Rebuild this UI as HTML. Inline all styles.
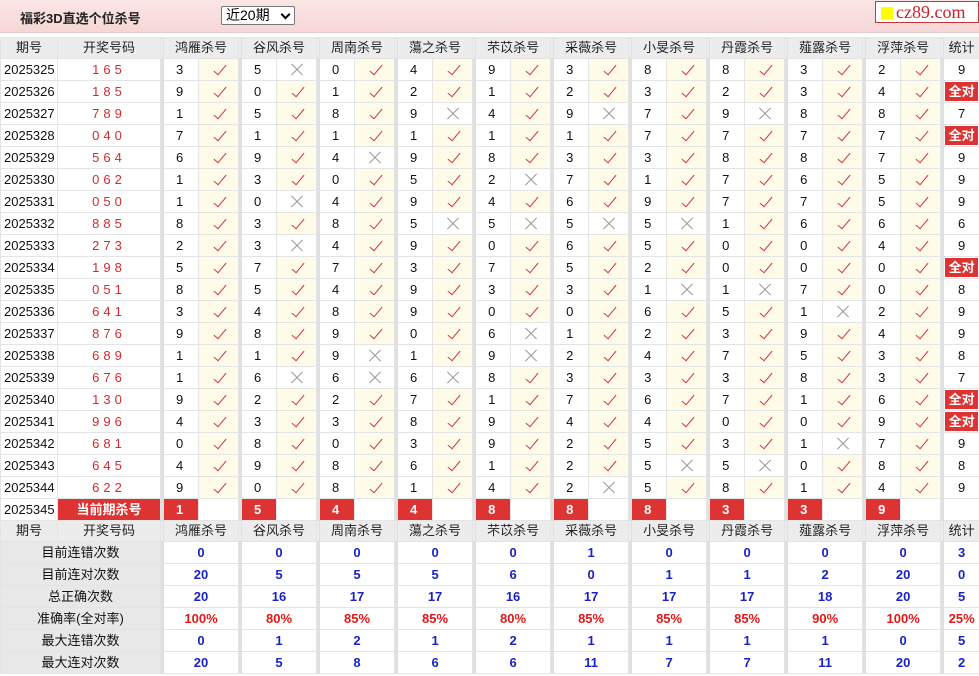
<!DOCTYPE html>
<html><head><meta charset="utf-8">
<style>
body{margin:0;width:979px;height:676px;overflow:hidden;background:#fff;font-family:"Liberation Sans","Noto Sans CJK SC",sans-serif;}
.top{position:absolute;left:0;top:0;width:979px;height:32px;background:linear-gradient(#fbe6e6,#f6d6d6);border-bottom:1px solid #e8c8c8;}
.title{position:absolute;left:20px;top:8px;font-size:13px;font-weight:bold;color:#222;}
.sel{position:absolute;left:221px;top:6px;width:68px;height:17px;border:1px solid #777;border-radius:2px;background:#fff;font-size:14px;line-height:17px;padding-left:4px;box-sizing:content-box;}
.sel i{position:absolute;right:5px;top:4px;width:5px;height:5px;border-right:2px solid #000;border-bottom:2px solid #000;transform:rotate(45deg);}
.logo{position:absolute;left:875px;top:1px;width:102px;height:20px;border:1px solid #c33;background:#fff;font-family:"Liberation Serif",serif;font-size:18px;color:#c8242b;line-height:20px;}
.logo b{display:inline-block;width:12px;height:12px;background:#ff0;margin:0 3px 0 5px;vertical-align:-1px;}
table{position:absolute;left:0;top:37px;border-collapse:collapse;table-layout:fixed;width:979px;font-size:13px;}
td{border:1px solid #e4e4e4;height:21px;line-height:20px;padding:0;text-align:center;color:#111;overflow:hidden;white-space:nowrap;}
tr.h td{background:#ececec;height:20px;color:#222;}
td.s{background:#e0e0e0;border-color:#e0e0e0;}
td.p{text-align:left;padding-left:3px;}
td.n{text-align:left;padding-left:12px;}
td.k{color:#d42b2b;letter-spacing:4px;}
td.y{background:#fffbe9;position:relative;}
td.y:after{content:"";position:absolute;left:18px;top:3px;width:5px;height:12px;border-right:1.6px solid #e0303c;border-bottom:1.6px solid #e0303c;transform:rotate(40deg);}
td.x{position:relative;}
td.x:before,td.x:after{content:"";position:absolute;left:12px;top:10px;width:16px;height:1px;background:#999;transform:rotate(45deg);}
td.x:after{transform:rotate(-45deg);}
td.a{padding:0 1px;}
td.a span{display:block;background:#d33;color:#fff;font-weight:bold;height:19px;line-height:19px;}
td.r{background:#d33;color:#fff;font-weight:bold;text-align:left;padding-left:12px;}
td.cur{background:#d33;color:#fff;font-weight:bold;}
td.l{background:#e8e8e8;}
td.b{color:#1a23c8;font-weight:bold;}
td.rr{color:#e01818;font-weight:bold;}
</style></head><body>
<div class="top"><div class="title">福彩3D直选个位杀号</div><div class="sel">近20期<i></i></div><div class="logo"><b></b>cz89.com</div></div>
<table>
<colgroup><col style="width:57px"><col style="width:103px">
<col style="width:3px"><col style="width:35px"><col style="width:40px">
<col style="width:3px"><col style="width:35px"><col style="width:40px">
<col style="width:3px"><col style="width:35px"><col style="width:40px">
<col style="width:3px"><col style="width:35px"><col style="width:40px">
<col style="width:3px"><col style="width:35px"><col style="width:40px">
<col style="width:3px"><col style="width:35px"><col style="width:40px">
<col style="width:3px"><col style="width:35px"><col style="width:40px">
<col style="width:3px"><col style="width:35px"><col style="width:40px">
<col style="width:3px"><col style="width:35px"><col style="width:40px">
<col style="width:3px"><col style="width:35px"><col style="width:40px">
<col style="width:3px"><col style="width:36px"></colgroup>
<tr class="h"><td>期号</td><td>开奖号码</td><td class="s"></td><td colspan="2">鸿雁杀号</td><td class="s"></td><td colspan="2">谷风杀号</td><td class="s"></td><td colspan="2">周南杀号</td><td class="s"></td><td colspan="2">蕩之杀号</td><td class="s"></td><td colspan="2">芣苡杀号</td><td class="s"></td><td colspan="2">采薇杀号</td><td class="s"></td><td colspan="2">小旻杀号</td><td class="s"></td><td colspan="2">丹霞杀号</td><td class="s"></td><td colspan="2">薤露杀号</td><td class="s"></td><td colspan="2">浮萍杀号</td><td class="s"></td><td>统计</td></tr>
<tr><td class="p">2025325</td><td class="k">165</td><td class="s"></td><td class="n">3</td><td class="y"></td><td class="s"></td><td class="n">5</td><td class="x"></td><td class="s"></td><td class="n">0</td><td class="y"></td><td class="s"></td><td class="n">4</td><td class="y"></td><td class="s"></td><td class="n">9</td><td class="y"></td><td class="s"></td><td class="n">3</td><td class="y"></td><td class="s"></td><td class="n">8</td><td class="y"></td><td class="s"></td><td class="n">8</td><td class="y"></td><td class="s"></td><td class="n">3</td><td class="y"></td><td class="s"></td><td class="n">2</td><td class="y"></td><td class="s"></td><td>9</td></tr>
<tr><td class="p">2025326</td><td class="k">185</td><td class="s"></td><td class="n">9</td><td class="y"></td><td class="s"></td><td class="n">0</td><td class="y"></td><td class="s"></td><td class="n">1</td><td class="y"></td><td class="s"></td><td class="n">2</td><td class="y"></td><td class="s"></td><td class="n">1</td><td class="y"></td><td class="s"></td><td class="n">2</td><td class="y"></td><td class="s"></td><td class="n">3</td><td class="y"></td><td class="s"></td><td class="n">2</td><td class="y"></td><td class="s"></td><td class="n">3</td><td class="y"></td><td class="s"></td><td class="n">4</td><td class="y"></td><td class="s"></td><td class="a"><span>全对</span></td></tr>
<tr><td class="p">2025327</td><td class="k">789</td><td class="s"></td><td class="n">1</td><td class="y"></td><td class="s"></td><td class="n">5</td><td class="y"></td><td class="s"></td><td class="n">8</td><td class="y"></td><td class="s"></td><td class="n">9</td><td class="x"></td><td class="s"></td><td class="n">4</td><td class="y"></td><td class="s"></td><td class="n">9</td><td class="x"></td><td class="s"></td><td class="n">7</td><td class="y"></td><td class="s"></td><td class="n">9</td><td class="x"></td><td class="s"></td><td class="n">8</td><td class="y"></td><td class="s"></td><td class="n">8</td><td class="y"></td><td class="s"></td><td>7</td></tr>
<tr><td class="p">2025328</td><td class="k">040</td><td class="s"></td><td class="n">7</td><td class="y"></td><td class="s"></td><td class="n">1</td><td class="y"></td><td class="s"></td><td class="n">1</td><td class="y"></td><td class="s"></td><td class="n">1</td><td class="y"></td><td class="s"></td><td class="n">1</td><td class="y"></td><td class="s"></td><td class="n">1</td><td class="y"></td><td class="s"></td><td class="n">7</td><td class="y"></td><td class="s"></td><td class="n">7</td><td class="y"></td><td class="s"></td><td class="n">7</td><td class="y"></td><td class="s"></td><td class="n">7</td><td class="y"></td><td class="s"></td><td class="a"><span>全对</span></td></tr>
<tr><td class="p">2025329</td><td class="k">564</td><td class="s"></td><td class="n">6</td><td class="y"></td><td class="s"></td><td class="n">9</td><td class="y"></td><td class="s"></td><td class="n">4</td><td class="x"></td><td class="s"></td><td class="n">9</td><td class="y"></td><td class="s"></td><td class="n">8</td><td class="y"></td><td class="s"></td><td class="n">3</td><td class="y"></td><td class="s"></td><td class="n">3</td><td class="y"></td><td class="s"></td><td class="n">8</td><td class="y"></td><td class="s"></td><td class="n">8</td><td class="y"></td><td class="s"></td><td class="n">7</td><td class="y"></td><td class="s"></td><td>9</td></tr>
<tr><td class="p">2025330</td><td class="k">062</td><td class="s"></td><td class="n">1</td><td class="y"></td><td class="s"></td><td class="n">3</td><td class="y"></td><td class="s"></td><td class="n">0</td><td class="y"></td><td class="s"></td><td class="n">5</td><td class="y"></td><td class="s"></td><td class="n">2</td><td class="x"></td><td class="s"></td><td class="n">7</td><td class="y"></td><td class="s"></td><td class="n">1</td><td class="y"></td><td class="s"></td><td class="n">7</td><td class="y"></td><td class="s"></td><td class="n">6</td><td class="y"></td><td class="s"></td><td class="n">5</td><td class="y"></td><td class="s"></td><td>9</td></tr>
<tr><td class="p">2025331</td><td class="k">050</td><td class="s"></td><td class="n">1</td><td class="y"></td><td class="s"></td><td class="n">0</td><td class="x"></td><td class="s"></td><td class="n">4</td><td class="y"></td><td class="s"></td><td class="n">9</td><td class="y"></td><td class="s"></td><td class="n">4</td><td class="y"></td><td class="s"></td><td class="n">6</td><td class="y"></td><td class="s"></td><td class="n">9</td><td class="y"></td><td class="s"></td><td class="n">7</td><td class="y"></td><td class="s"></td><td class="n">7</td><td class="y"></td><td class="s"></td><td class="n">5</td><td class="y"></td><td class="s"></td><td>9</td></tr>
<tr><td class="p">2025332</td><td class="k">885</td><td class="s"></td><td class="n">8</td><td class="y"></td><td class="s"></td><td class="n">3</td><td class="y"></td><td class="s"></td><td class="n">8</td><td class="y"></td><td class="s"></td><td class="n">5</td><td class="x"></td><td class="s"></td><td class="n">5</td><td class="x"></td><td class="s"></td><td class="n">5</td><td class="x"></td><td class="s"></td><td class="n">5</td><td class="x"></td><td class="s"></td><td class="n">1</td><td class="y"></td><td class="s"></td><td class="n">6</td><td class="y"></td><td class="s"></td><td class="n">6</td><td class="y"></td><td class="s"></td><td>6</td></tr>
<tr><td class="p">2025333</td><td class="k">273</td><td class="s"></td><td class="n">2</td><td class="y"></td><td class="s"></td><td class="n">3</td><td class="x"></td><td class="s"></td><td class="n">4</td><td class="y"></td><td class="s"></td><td class="n">9</td><td class="y"></td><td class="s"></td><td class="n">0</td><td class="y"></td><td class="s"></td><td class="n">6</td><td class="y"></td><td class="s"></td><td class="n">5</td><td class="y"></td><td class="s"></td><td class="n">0</td><td class="y"></td><td class="s"></td><td class="n">0</td><td class="y"></td><td class="s"></td><td class="n">4</td><td class="y"></td><td class="s"></td><td>9</td></tr>
<tr><td class="p">2025334</td><td class="k">198</td><td class="s"></td><td class="n">5</td><td class="y"></td><td class="s"></td><td class="n">7</td><td class="y"></td><td class="s"></td><td class="n">7</td><td class="y"></td><td class="s"></td><td class="n">3</td><td class="y"></td><td class="s"></td><td class="n">7</td><td class="y"></td><td class="s"></td><td class="n">5</td><td class="y"></td><td class="s"></td><td class="n">2</td><td class="y"></td><td class="s"></td><td class="n">0</td><td class="y"></td><td class="s"></td><td class="n">0</td><td class="y"></td><td class="s"></td><td class="n">0</td><td class="y"></td><td class="s"></td><td class="a"><span>全对</span></td></tr>
<tr><td class="p">2025335</td><td class="k">051</td><td class="s"></td><td class="n">8</td><td class="y"></td><td class="s"></td><td class="n">5</td><td class="y"></td><td class="s"></td><td class="n">4</td><td class="y"></td><td class="s"></td><td class="n">9</td><td class="y"></td><td class="s"></td><td class="n">3</td><td class="y"></td><td class="s"></td><td class="n">3</td><td class="y"></td><td class="s"></td><td class="n">1</td><td class="x"></td><td class="s"></td><td class="n">1</td><td class="x"></td><td class="s"></td><td class="n">7</td><td class="y"></td><td class="s"></td><td class="n">0</td><td class="y"></td><td class="s"></td><td>8</td></tr>
<tr><td class="p">2025336</td><td class="k">641</td><td class="s"></td><td class="n">3</td><td class="y"></td><td class="s"></td><td class="n">4</td><td class="y"></td><td class="s"></td><td class="n">8</td><td class="y"></td><td class="s"></td><td class="n">9</td><td class="y"></td><td class="s"></td><td class="n">0</td><td class="y"></td><td class="s"></td><td class="n">0</td><td class="y"></td><td class="s"></td><td class="n">6</td><td class="y"></td><td class="s"></td><td class="n">5</td><td class="y"></td><td class="s"></td><td class="n">1</td><td class="x"></td><td class="s"></td><td class="n">2</td><td class="y"></td><td class="s"></td><td>9</td></tr>
<tr><td class="p">2025337</td><td class="k">876</td><td class="s"></td><td class="n">9</td><td class="y"></td><td class="s"></td><td class="n">8</td><td class="y"></td><td class="s"></td><td class="n">9</td><td class="y"></td><td class="s"></td><td class="n">0</td><td class="y"></td><td class="s"></td><td class="n">6</td><td class="x"></td><td class="s"></td><td class="n">1</td><td class="y"></td><td class="s"></td><td class="n">2</td><td class="y"></td><td class="s"></td><td class="n">3</td><td class="y"></td><td class="s"></td><td class="n">9</td><td class="y"></td><td class="s"></td><td class="n">4</td><td class="y"></td><td class="s"></td><td>9</td></tr>
<tr><td class="p">2025338</td><td class="k">689</td><td class="s"></td><td class="n">1</td><td class="y"></td><td class="s"></td><td class="n">1</td><td class="y"></td><td class="s"></td><td class="n">9</td><td class="x"></td><td class="s"></td><td class="n">1</td><td class="y"></td><td class="s"></td><td class="n">9</td><td class="x"></td><td class="s"></td><td class="n">2</td><td class="y"></td><td class="s"></td><td class="n">4</td><td class="y"></td><td class="s"></td><td class="n">7</td><td class="y"></td><td class="s"></td><td class="n">5</td><td class="y"></td><td class="s"></td><td class="n">3</td><td class="y"></td><td class="s"></td><td>8</td></tr>
<tr><td class="p">2025339</td><td class="k">676</td><td class="s"></td><td class="n">1</td><td class="y"></td><td class="s"></td><td class="n">6</td><td class="x"></td><td class="s"></td><td class="n">6</td><td class="x"></td><td class="s"></td><td class="n">6</td><td class="x"></td><td class="s"></td><td class="n">8</td><td class="y"></td><td class="s"></td><td class="n">3</td><td class="y"></td><td class="s"></td><td class="n">3</td><td class="y"></td><td class="s"></td><td class="n">3</td><td class="y"></td><td class="s"></td><td class="n">8</td><td class="y"></td><td class="s"></td><td class="n">3</td><td class="y"></td><td class="s"></td><td>7</td></tr>
<tr><td class="p">2025340</td><td class="k">130</td><td class="s"></td><td class="n">9</td><td class="y"></td><td class="s"></td><td class="n">2</td><td class="y"></td><td class="s"></td><td class="n">2</td><td class="y"></td><td class="s"></td><td class="n">7</td><td class="y"></td><td class="s"></td><td class="n">1</td><td class="y"></td><td class="s"></td><td class="n">7</td><td class="y"></td><td class="s"></td><td class="n">6</td><td class="y"></td><td class="s"></td><td class="n">7</td><td class="y"></td><td class="s"></td><td class="n">1</td><td class="y"></td><td class="s"></td><td class="n">6</td><td class="y"></td><td class="s"></td><td class="a"><span>全对</span></td></tr>
<tr><td class="p">2025341</td><td class="k">996</td><td class="s"></td><td class="n">4</td><td class="y"></td><td class="s"></td><td class="n">3</td><td class="y"></td><td class="s"></td><td class="n">3</td><td class="y"></td><td class="s"></td><td class="n">8</td><td class="y"></td><td class="s"></td><td class="n">9</td><td class="y"></td><td class="s"></td><td class="n">4</td><td class="y"></td><td class="s"></td><td class="n">4</td><td class="y"></td><td class="s"></td><td class="n">0</td><td class="y"></td><td class="s"></td><td class="n">0</td><td class="y"></td><td class="s"></td><td class="n">9</td><td class="y"></td><td class="s"></td><td class="a"><span>全对</span></td></tr>
<tr><td class="p">2025342</td><td class="k">681</td><td class="s"></td><td class="n">0</td><td class="y"></td><td class="s"></td><td class="n">8</td><td class="y"></td><td class="s"></td><td class="n">0</td><td class="y"></td><td class="s"></td><td class="n">3</td><td class="y"></td><td class="s"></td><td class="n">9</td><td class="y"></td><td class="s"></td><td class="n">2</td><td class="y"></td><td class="s"></td><td class="n">5</td><td class="y"></td><td class="s"></td><td class="n">3</td><td class="y"></td><td class="s"></td><td class="n">1</td><td class="x"></td><td class="s"></td><td class="n">7</td><td class="y"></td><td class="s"></td><td>9</td></tr>
<tr><td class="p">2025343</td><td class="k">645</td><td class="s"></td><td class="n">4</td><td class="y"></td><td class="s"></td><td class="n">9</td><td class="y"></td><td class="s"></td><td class="n">8</td><td class="y"></td><td class="s"></td><td class="n">6</td><td class="y"></td><td class="s"></td><td class="n">1</td><td class="y"></td><td class="s"></td><td class="n">2</td><td class="y"></td><td class="s"></td><td class="n">5</td><td class="x"></td><td class="s"></td><td class="n">5</td><td class="x"></td><td class="s"></td><td class="n">0</td><td class="y"></td><td class="s"></td><td class="n">8</td><td class="y"></td><td class="s"></td><td>8</td></tr>
<tr><td class="p">2025344</td><td class="k">622</td><td class="s"></td><td class="n">9</td><td class="y"></td><td class="s"></td><td class="n">0</td><td class="y"></td><td class="s"></td><td class="n">8</td><td class="y"></td><td class="s"></td><td class="n">1</td><td class="y"></td><td class="s"></td><td class="n">4</td><td class="y"></td><td class="s"></td><td class="n">2</td><td class="x"></td><td class="s"></td><td class="n">5</td><td class="y"></td><td class="s"></td><td class="n">8</td><td class="y"></td><td class="s"></td><td class="n">1</td><td class="y"></td><td class="s"></td><td class="n">4</td><td class="y"></td><td class="s"></td><td>9</td></tr>
<tr><td class="p">2025345</td><td class="cur">当前期杀号</td><td class="s"></td><td class="r">1</td><td></td><td class="s"></td><td class="r">5</td><td></td><td class="s"></td><td class="r">4</td><td></td><td class="s"></td><td class="r">4</td><td></td><td class="s"></td><td class="r">8</td><td></td><td class="s"></td><td class="r">8</td><td></td><td class="s"></td><td class="r">8</td><td></td><td class="s"></td><td class="r">3</td><td></td><td class="s"></td><td class="r">3</td><td></td><td class="s"></td><td class="r">9</td><td></td><td class="s"></td><td></td></tr>
<tr class="h"><td>期号</td><td>开奖号码</td><td class="s"></td><td colspan="2">鸿雁杀号</td><td class="s"></td><td colspan="2">谷风杀号</td><td class="s"></td><td colspan="2">周南杀号</td><td class="s"></td><td colspan="2">蕩之杀号</td><td class="s"></td><td colspan="2">芣苡杀号</td><td class="s"></td><td colspan="2">采薇杀号</td><td class="s"></td><td colspan="2">小旻杀号</td><td class="s"></td><td colspan="2">丹霞杀号</td><td class="s"></td><td colspan="2">薤露杀号</td><td class="s"></td><td colspan="2">浮萍杀号</td><td class="s"></td><td>统计</td></tr>
<tr><td class="l" colspan="2">目前连错次数</td><td class="s"></td><td class="b" colspan="2">0</td><td class="s"></td><td class="b" colspan="2">0</td><td class="s"></td><td class="b" colspan="2">0</td><td class="s"></td><td class="b" colspan="2">0</td><td class="s"></td><td class="b" colspan="2">0</td><td class="s"></td><td class="b" colspan="2">1</td><td class="s"></td><td class="b" colspan="2">0</td><td class="s"></td><td class="b" colspan="2">0</td><td class="s"></td><td class="b" colspan="2">0</td><td class="s"></td><td class="b" colspan="2">0</td><td class="s"></td><td class="b">3</td></tr>
<tr><td class="l" colspan="2">目前连对次数</td><td class="s"></td><td class="b" colspan="2">20</td><td class="s"></td><td class="b" colspan="2">5</td><td class="s"></td><td class="b" colspan="2">5</td><td class="s"></td><td class="b" colspan="2">5</td><td class="s"></td><td class="b" colspan="2">6</td><td class="s"></td><td class="b" colspan="2">0</td><td class="s"></td><td class="b" colspan="2">1</td><td class="s"></td><td class="b" colspan="2">1</td><td class="s"></td><td class="b" colspan="2">2</td><td class="s"></td><td class="b" colspan="2">20</td><td class="s"></td><td class="b">0</td></tr>
<tr><td class="l" colspan="2">总正确次数</td><td class="s"></td><td class="b" colspan="2">20</td><td class="s"></td><td class="b" colspan="2">16</td><td class="s"></td><td class="b" colspan="2">17</td><td class="s"></td><td class="b" colspan="2">17</td><td class="s"></td><td class="b" colspan="2">16</td><td class="s"></td><td class="b" colspan="2">17</td><td class="s"></td><td class="b" colspan="2">17</td><td class="s"></td><td class="b" colspan="2">17</td><td class="s"></td><td class="b" colspan="2">18</td><td class="s"></td><td class="b" colspan="2">20</td><td class="s"></td><td class="b">5</td></tr>
<tr><td class="l" colspan="2">准确率(全对率)</td><td class="s"></td><td class="rr" colspan="2">100%</td><td class="s"></td><td class="rr" colspan="2">80%</td><td class="s"></td><td class="rr" colspan="2">85%</td><td class="s"></td><td class="rr" colspan="2">85%</td><td class="s"></td><td class="rr" colspan="2">80%</td><td class="s"></td><td class="rr" colspan="2">85%</td><td class="s"></td><td class="rr" colspan="2">85%</td><td class="s"></td><td class="rr" colspan="2">85%</td><td class="s"></td><td class="rr" colspan="2">90%</td><td class="s"></td><td class="rr" colspan="2">100%</td><td class="s"></td><td class="rr">25%</td></tr>
<tr><td class="l" colspan="2">最大连错次数</td><td class="s"></td><td class="b" colspan="2">0</td><td class="s"></td><td class="b" colspan="2">1</td><td class="s"></td><td class="b" colspan="2">2</td><td class="s"></td><td class="b" colspan="2">1</td><td class="s"></td><td class="b" colspan="2">2</td><td class="s"></td><td class="b" colspan="2">1</td><td class="s"></td><td class="b" colspan="2">1</td><td class="s"></td><td class="b" colspan="2">1</td><td class="s"></td><td class="b" colspan="2">1</td><td class="s"></td><td class="b" colspan="2">0</td><td class="s"></td><td class="b">5</td></tr>
<tr><td class="l" colspan="2">最大连对次数</td><td class="s"></td><td class="b" colspan="2">20</td><td class="s"></td><td class="b" colspan="2">5</td><td class="s"></td><td class="b" colspan="2">8</td><td class="s"></td><td class="b" colspan="2">6</td><td class="s"></td><td class="b" colspan="2">6</td><td class="s"></td><td class="b" colspan="2">11</td><td class="s"></td><td class="b" colspan="2">7</td><td class="s"></td><td class="b" colspan="2">7</td><td class="s"></td><td class="b" colspan="2">11</td><td class="s"></td><td class="b" colspan="2">20</td><td class="s"></td><td class="b">2</td></tr>
</table>
</body></html>
